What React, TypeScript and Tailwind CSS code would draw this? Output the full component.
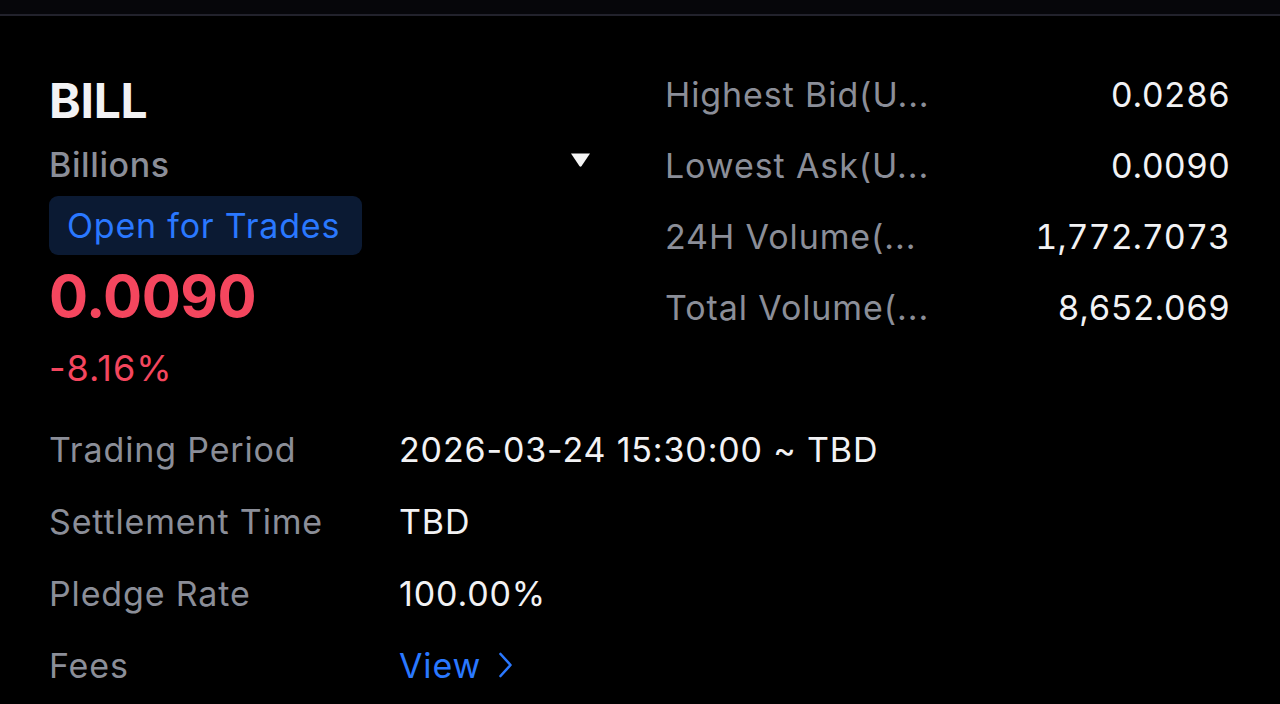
import React from 'react';

const stats = [
  { label: 'Highest Bid(U...', value: '0.0286' },
  { label: 'Lowest Ask(U...', value: '0.0090' },
  { label: '24H Volume(...', value: '1,772.7073' },
  { label: 'Total Volume(...', value: '8,652.069' },
];

const details = [
  { label: 'Trading Period', value: '2026-03-24 15:30:00 ~ TBD' },
  { label: 'Settlement Time', value: 'TBD' },
  { label: 'Pledge Rate', value: '100.00%' },
];

export default function App() {
  return (
    <div
      className="w-[1280px] h-[704px] overflow-hidden bg-black text-[#f2f2f4]"
      style={{ fontFamily: 'Inter, "Noto Sans", sans-serif' }}
    >
      {/* top strip */}
      <div className="h-[14px] bg-[#06060a]" />
      <div className="h-[2px] bg-[#22222c]" />

      <div className="flex">
        {/* left: token header */}
        <div className="w-[665px] pl-[49px]">
          <div className="mt-[57px] h-[56px] flex items-center text-[48px] font-bold tracking-[-0.3px]">
            BILL
          </div>
          <div className="mt-[15px] h-[40px] w-[543px] flex items-center justify-between">
            <span className="text-[34px] font-medium tracking-[0.6px] text-[#8b8e98]">Billions</span>
            <svg width="23" height="16" viewBox="0 0 23 16" className="mb-[8px]">
              <path d="M2 1.5 H21 L12.6 14 Q11.5 15.4 10.4 14 Z" fill="#f5f5f5" />
            </svg>
          </div>
          <div className="mt-[12px] h-[59px] w-[313px] rounded-[9px] bg-[#0b1a33] flex items-center pl-[18px] text-[34px] tracking-[0.8px] text-[#2a78ff]">
            Open for Trades
          </div>
          <div className="mt-[6px] h-[70px] flex items-center text-[58px] font-bold text-[#f4465e] tracking-[-0.5px]">
            0.0090
          </div>
          <div className="mt-[17px] h-[40px] flex items-center text-[36px] tracking-[1px] text-[#f4465e]">
            -8.16%
          </div>
        </div>

        {/* right: market stats */}
        <div className="flex-1 pr-[50px] pt-[43px]">
          {stats.map((s) => (
            <div key={s.label} className="h-[71px] flex items-center justify-between text-[34px]">
              <span className="tracking-[0.9px] text-[#8b8e98]">{s.label}</span>
              <span className="tabular-nums text-[#f2f2f4]">{s.value}</span>
            </div>
          ))}
        </div>
      </div>

      {/* details */}
      <div className="mt-[25px] pl-[49px]">
        {details.map((d) => (
          <div key={d.label} className="h-[72px] flex items-center text-[34px] tracking-[0.85px]">
            <span className="w-[350px] text-[#8b8e98]">{d.label}</span>
            <span className="text-[#f2f2f4]">{d.value}</span>
          </div>
        ))}
        <div className="h-[72px] flex items-center text-[34px] tracking-[0.85px]">
          <span className="w-[350px] text-[#8b8e98]">Fees</span>
          <span className="flex items-center gap-[17px] text-[#2a78ff]">
            View
            <svg width="15" height="26" viewBox="0 0 15 26">
              <path d="M2.5 2 L12.5 13 L2.5 24" fill="none" stroke="#2a78ff" strokeWidth="2.6" strokeLinecap="round" strokeLinejoin="round" />
            </svg>
          </span>
        </div>
      </div>
    </div>
  );
}
